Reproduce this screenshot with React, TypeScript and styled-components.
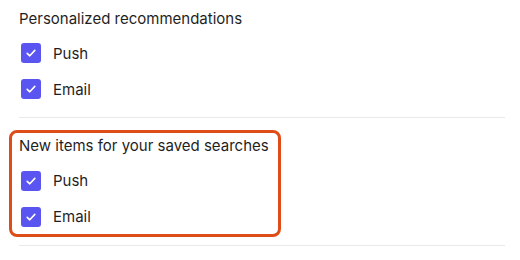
import React from "react";
import styled, { createGlobalStyle } from "styled-components";

const Global = createGlobalStyle`
  html, body { margin: 0; padding: 0; background: #ffffff; }
  body { font-family: Inter, "Noto Sans", sans-serif; color: #1f1f1f; }
  * { box-sizing: border-box; }
`;

const Page = styled.div`
  display: flex;
  flex-direction: column;
  width: 505px;
  padding-left: 19px;
`;

const Section = styled.section<{ $highlight?: boolean }>`
  display: flex;
  flex-direction: column;
  padding: ${(p) => (p.$highlight ? "1px 0 7px 7px" : "6.5px 0 18px 0")};
  ${(p) =>
    p.$highlight
      ? `
    margin: 12px 0 8px -10px;
    width: 272px;
    border: 3px solid #de4d17;
    border-radius: 8px;
  `
      : ""}
`;

const Divider = styled.hr`
  margin: 0;
  border: 0;
  height: 1px;
  background: #e9e9e9;
  width: 100%;
`;

const Title = styled.div`
  font-size: 15px;
  line-height: 24px;
  margin-bottom: 12.5px;
`;

const Options = styled.div`
  display: flex;
  flex-direction: column;
  gap: 16px;
`;

const Option = styled.label`
  display: flex;
  align-items: center;
  gap: 12px;
  height: 20px;
  font-size: 15px;
  padding-left: 2px;
`;

const Box = styled.span`
  width: 20px;
  height: 20px;
  border-radius: 3px;
  background: #5a55f0;
  display: flex;
  align-items: center;
  justify-content: center;
  flex-shrink: 0;
`;

const Check = () => (
  <Box>
    <svg width="12" height="12" viewBox="0 0 12 12" fill="none">
      <path d="M2.2 6.3 L4.8 8.8 L9.8 3.4" stroke="#ffffff" strokeWidth="1.6" strokeLinecap="round" strokeLinejoin="round" />
    </svg>
  </Box>
);

const groups = [
  { title: "Personalized recommendations", highlight: false },
  { title: "New items for your saved searches", highlight: true },
];

export default function App() {
  return (
    <>
      <Global />
      <Page>
        {groups.map((g) => (
          <React.Fragment key={g.title}>
            <Section $highlight={g.highlight}>
              <Title>{g.title}</Title>
              <Options>
                <Option><Check />Push</Option>
                <Option><Check />Email</Option>
              </Options>
            </Section>
            <Divider />
          </React.Fragment>
        ))}
      </Page>
    </>
  );
}
